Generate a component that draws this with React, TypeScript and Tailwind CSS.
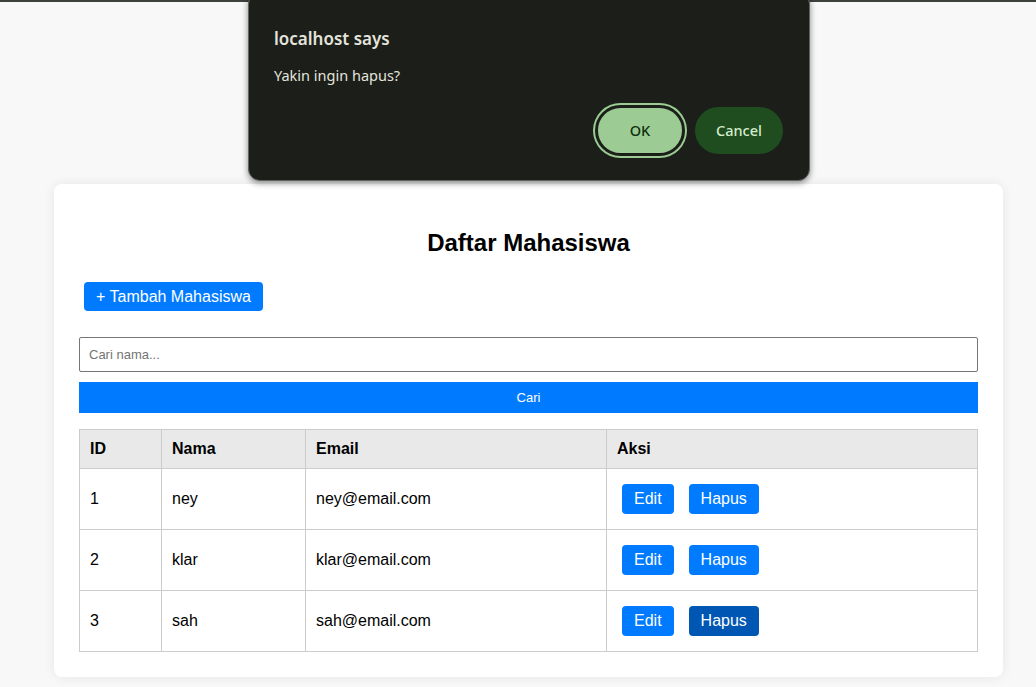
const rows = [
  { id: 1, nama: "ney", email: "ney@email.com" },
  { id: 2, nama: "klar", email: "klar@email.com" },
  { id: 3, nama: "sah", email: "sah@email.com" },
];

const cell = "border border-[#cccccc] px-[10px] py-[10px] text-left align-middle";

export default function App() {
  return (
    <div className="relative min-h-[687px] bg-[#f8f8f8] font-['Liberation_Sans',Arial,sans-serif] text-black">
      <div className="h-[2px] bg-[#3d423b]" />

      {/* browser confirm dialog */}
      <div className="absolute left-[248px] top-[-8px] z-10 w-[562px] rounded-[12px] border border-[#62655f] bg-[#1b1e19] pl-[25px] pr-[26px] pt-[34px] pb-[22px] font-['Noto_Sans',sans-serif] shadow-[0_2px_6px_rgba(0,0,0,0.45)]">
        <div className="text-[17px] font-semibold leading-[24px] text-[#e4e4dd]">localhost says</div>
        <div className="mt-[14px] text-[14.5px] leading-[20px] text-[#e4e4dd]">Yakin ingin hapus?</div>
        <div className="mt-[18px] flex justify-end gap-[8px]">
          <div className="rounded-full p-[2px] bg-[#9ccc93]">
            <button className="flex h-[51px] w-[90px] items-center justify-center rounded-full border-[3px] border-[#1b1e19] bg-[#9ccc93] text-[14.5px] font-medium text-[#0e2f10]">
              OK
            </button>
          </div>
          <button className="mt-[4px] flex h-[47px] w-[88px] items-center justify-center rounded-full bg-[#1f4d20] text-[14.5px] font-medium text-[#d4ecca]">
            Cancel
          </button>
        </div>
      </div>

      <div className="pt-[182px]">
        <div className="ml-[54px] w-[949px] rounded-[8px] bg-white p-[25px] shadow-[0_0_12px_rgba(0,0,0,0.08)]">
          <h2 className="mt-[20px] mb-[20px] text-center text-[24px] font-bold leading-[28px]">Daftar Mahasiswa</h2>

          <button className="m-[5px] h-[29px] rounded-[4px] bg-[#007bff] px-[12px] text-[16px] leading-[18px] text-white">
            + Tambah Mahasiswa
          </button>

          <form className="mt-[21px]" onSubmit={(e) => e.preventDefault()}>
            <input
              placeholder="Cari nama..."
              className="block h-[35px] w-full rounded-[2px] border border-[#767676] px-[9px] text-[13px] placeholder:text-[#757575] outline-none"
            />
            <button className="mt-[10px] block h-[31px] w-full bg-[#007bff] text-[13px] text-white">Cari</button>
          </form>

          <table className="mt-[16px] w-full border-collapse text-[16px]">
            <thead>
              <tr className="bg-[#e9e9e9]">
                <th className={`${cell} w-[82px] font-bold leading-[18px]`}>ID</th>
                <th className={`${cell} w-[144px] font-bold leading-[18px]`}>Nama</th>
                <th className={`${cell} w-[301px] font-bold leading-[18px]`}>Email</th>
                <th className={`${cell} font-bold leading-[18px]`}>Aksi</th>
              </tr>
            </thead>
            <tbody>
              {rows.map((r) => (
                <tr key={r.id} className="h-[61px]">
                  <td className={cell}>{r.id}</td>
                  <td className={cell}>{r.nama}</td>
                  <td className={cell}>{r.email}</td>
                  <td className={cell}>
                    <div className="flex gap-[15px] px-[5px]">
                      <button className="h-[30px] rounded-[4px] bg-[#007bff] px-[12px] text-[16px] text-white">Edit</button>
                      <button
                        className={`h-[30px] rounded-[4px] px-[12px] text-[16px] text-white ${
                          r.id === 3 ? "bg-[#0056b3]" : "bg-[#007bff]"
                        }`}
                      >
                        Hapus
                      </button>
                    </div>
                  </td>
                </tr>
              ))}
            </tbody>
          </table>
        </div>
      </div>
    </div>
  );
}
